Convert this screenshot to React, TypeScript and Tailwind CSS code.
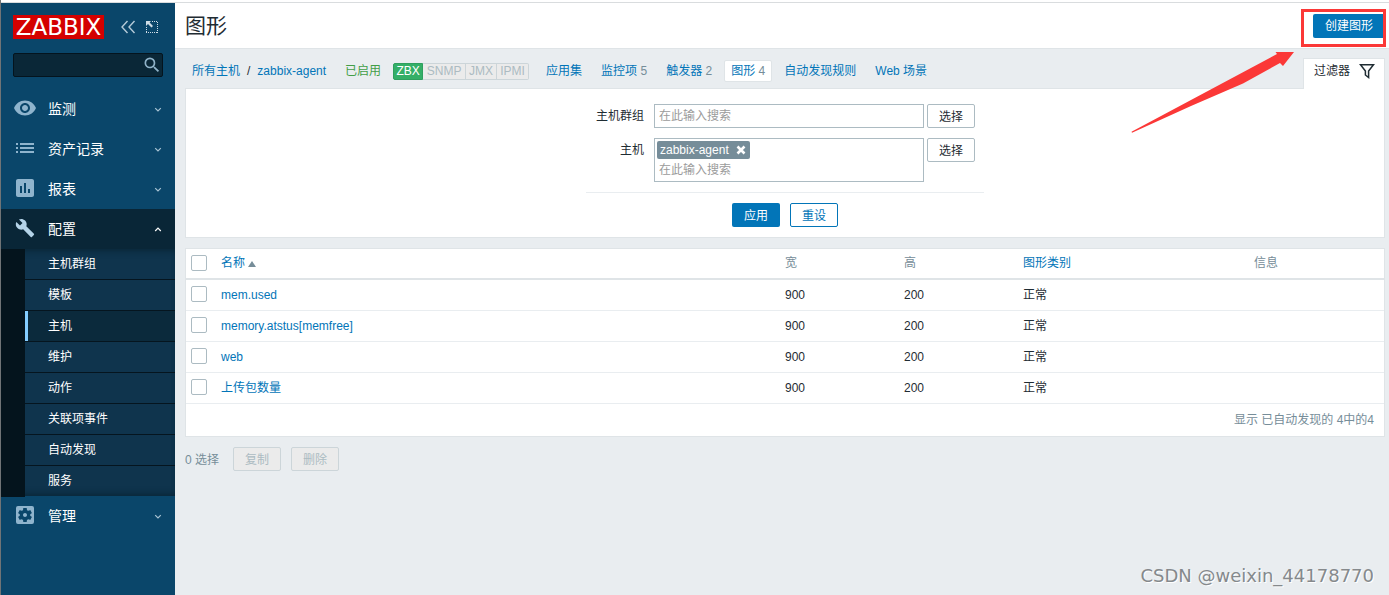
import React, { FC, ReactNode } from 'react'
import { IconType } from 'react-icons'
import {
  MdAssessment,
  MdBuild,
  MdList,
  MdSearch,
  MdSettingsApplications,
  MdVisibility,
} from 'react-icons/md'

interface MenuRow {
  label: string,
  Icon: IconType,
  items?: string[],
}

const menu: MenuRow[] = [
  { label: '监测', Icon: MdVisibility },
  { label: '资产记录', Icon: MdList },
  { label: '报表', Icon: MdAssessment },
  {
    label: '配置',
    Icon: MdBuild,
    items: ['主机群组', '模板', '主机', '维护', '动作', '关联项事件', '自动发现', '服务'],
  },
  { label: '管理', Icon: MdSettingsApplications },
]

const graphs = ['mem.used', 'memory.atstus[memfree]', 'web', '上传包数量']

const Chevron: FC<{ up?: boolean }> = ({ up }) => (
  <svg width="8" height="6" viewBox="0 0 8 6" fill="none" stroke="currentColor" strokeWidth="1.2" className={up ? 'text-white' : 'text-[#a9c4d4]'}>
    <path d={up ? 'M1.2 5 L4 2.2 L6.8 5' : 'M1.2 2.2 L4 5 L6.8 2.2'} />
  </svg>
)

const Sidebar: FC = () => (
  <aside className="w-[174px] shrink-0 bg-[#0a466a] text-white">
    <div className="flex h-12 items-center pl-3">
      <a href="#" className="flex h-6 w-[91px] items-center justify-center bg-[#d40000] font-['DejaVu_Sans',sans-serif] text-[23px] leading-6">
        ZABBIX
      </a>
      <button type="button" aria-label="收起" className="ml-4 text-[#b5cbd8]">
        <svg width="16" height="14" viewBox="0 0 16 14" fill="none" stroke="currentColor" strokeWidth="1.4">
          <path d="M7.5 1 L2 7 L7.5 13 M14.5 1 L9 7 L14.5 13" />
        </svg>
      </button>
      <button type="button" aria-label="隐藏侧栏" className="ml-[9px] text-[#cfdde6]">
        <svg width="14" height="14" viewBox="0 0 14 14" fill="none" stroke="currentColor">
          <path strokeDasharray="1 1" d="M7 1.5 H13 M12.5 2 V13 M1 12.5 H13 M1.5 7 V13" />
          <path fill="currentColor" stroke="none" d="M1 1 H6 L4.6 2.6 L8 6 L6.5 7.5 L3 4 L1 6 Z" />
        </svg>
      </button>
    </div>

    <div className="relative mx-3 mt-[2px]">
      <input type="text" aria-label="搜索" className="block h-6 w-full rounded-xs border border-[#04141e] bg-[#0a2737] pr-7 pl-2 text-xs outline-none" />
      <button type="button" aria-label="搜索" className="absolute top-[2px] right-px text-[#90b3c9]">
        <MdSearch size={20} />
      </button>
    </div>

    <nav className="mt-3">
      {menu.map(({ label, Icon, items }) => (
        <div key={label}>
          <a href="#" className={items ? 'flex h-10 items-center bg-[#092637] pr-[13px] pl-3' : 'flex h-10 items-center pr-[13px] pl-3'}>
            <span className={items ? 'flex w-6 justify-center pb-[2px] text-[#b4d3e8]' : 'flex w-6 justify-center pb-[2px] text-[#8fb4cd]'}>
              <Icon size={items ? 20 : 24} />
            </span>
            <span className="ml-[11px] flex-1 text-sm">{label}</span>
            <Chevron up={!!items} />
          </a>
          {items && (
            <ul className="divide-y divide-[#05151f] bg-[#0f344d] shadow-[inset_0_6px_6px_-4px_#092637,inset_0_-6px_6px_-4px_#092637]">
              {items.map(item => (
                <li key={item} className="flex">
                  <span className="-mb-px w-6 bg-[#04141d]" />
                  <a
                    href="#"
                    className={item === '主机'
                      ? 'flex h-[30px] flex-1 items-center border-l-3 border-[#84cdff] bg-[#0b2a3c] pl-5 text-xs'
                      : 'flex h-[30px] flex-1 items-center pl-[23px] text-xs'}
                  >
                    {item}
                  </a>
                </li>
              ))}
            </ul>
          )}
        </div>
      ))}
    </nav>
  </aside>
)

const NavLink: FC<{ label: string, count?: number }> = ({ label, count }) => (
  <a href="#" className="text-[#0275b8]">
    {label}
    {count && <span className="text-[#768d99]"> {count}</span>}
  </a>
)

const HostNav: FC = () => (
  <nav className="flex items-center pt-[11px] pl-[7px]">
    <NavLink label="所有主机" />
    <span className="mx-[7px]">/</span>
    <NavLink label="zabbix-agent" />
    <span className="ml-[19px] text-[#429e47]">已启用</span>
    <div className="mr-[17px] ml-3 flex h-[17px] items-stretch rounded-xs text-center leading-[15px]">
      <span className="w-[30px] rounded-l-xs border border-[#2f9f5e] bg-[#34af67] text-white">ZBX</span>
      <span className="w-[43px] border-y border-r border-[#ccd5d9] bg-[#ebebeb] text-[#acbbc2]">SNMP</span>
      <span className="w-[31px] border-y border-r border-[#ccd5d9] bg-[#ebebeb] text-[#acbbc2]">JMX</span>
      <span className="w-8 rounded-r-xs border-y border-r border-[#ccd5d9] bg-[#ebebeb] text-[#acbbc2]">IPMI</span>
    </div>
    <div className="flex items-center gap-[19px]">
      <NavLink label="应用集" />
      <NavLink label="监控项" count={5} />
      <NavLink label="触发器" count={2} />
      <div className="-mx-[7px] flex h-[22px] items-center rounded-xs border border-[#dfe4e7] bg-white px-[6px]">
        <NavLink label="图形" count={4} />
      </div>
      <NavLink label="自动发现规则" />
      <NavLink label="Web 场景" />
    </div>
  </nav>
)

const SelectButton: FC = () => (
  <button type="button" className="h-6 w-12 rounded-xs border border-[#acbbc2] bg-white pt-px">选择</button>
)

const Field: FC<{ id: string, label: string, children?: ReactNode }> = ({ id, label, children }) => (
  <div className="flex items-start">
    <label htmlFor={id} className="mr-[10px] w-[58px] text-right leading-6">{label}</label>
    <div className="mr-[3px] w-[270px] border border-[#acbbc2] p-[2px]">
      {children}
      <input id={id} type="text" placeholder="在此输入搜索" className="block h-[18px] w-full px-[2px] outline-none placeholder:text-[#9b9b9b]" />
    </div>
    <SelectButton />
  </div>
)

const Filter: FC = () => (
  <form className="border border-[#dfe4e7] bg-white pt-[15px] pb-[10px]" onSubmit={e => e.preventDefault()}>
    <div className="mx-auto w-[398px]">
      <div className="flex flex-col gap-[10px] border-b border-[#e9edf0] pb-[10px]">
        <Field id="groups" label="主机群组" />
        <Field id="hosts" label="主机">
          <div className="mb-[2px] flex">
            <span className="flex h-[18px] items-center rounded-xs bg-[#768d99] pr-1 pl-[3px] text-white">
              zabbix-agent
              <button type="button" aria-label="移除" className="ml-[7px]">
                <svg width="10" height="10" viewBox="0 0 10 10" stroke="currentColor" strokeWidth="2.6">
                  <path d="M1.5 1.5 L8.5 8.5 M8.5 1.5 L1.5 8.5" />
                </svg>
              </button>
            </span>
          </div>
        </Field>
      </div>
      <div className="mt-[10px] flex justify-center gap-[10px]">
        <button type="submit" className="h-6 w-12 rounded-xs bg-[#0275b8] pt-px text-white">应用</button>
        <button type="reset" className="h-6 w-12 rounded-xs border border-[#0275b8] pt-px text-[#0275b8]">重设</button>
      </div>
    </div>
  </form>
)

const Check: FC<{ label: string }> = ({ label }) => (
  <input type="checkbox" aria-label={label} className="block size-4 appearance-none rounded-xs border border-[#acbbc2] bg-white" />
)

const GraphTable: FC = () => (
  <div className="mt-[10px] border border-[#dfe4e7] bg-white">
    <table className="w-full table-fixed border-separate border-spacing-0 text-left">
      <thead>
        <tr className="h-[31px] text-[#768d99] *:border-b-2 *:border-[#dfe4e7] *:px-[5px] *:pb-[2px] *:font-normal">
          <th className="w-[30px]"><Check label="全选" /></th>
          <th>
            <a href="#" className="flex items-center gap-[3px] text-[#0275b8]">
              名称
              <svg width="8" height="6" viewBox="0 0 8 6" className="mt-[2px] text-[#768d99]">
                <path fill="currentColor" d="M4 0 L8 6 H0 Z" />
              </svg>
            </a>
          </th>
          <th className="w-[119px]">宽</th>
          <th className="w-[119px]">高</th>
          <th className="w-[231px]"><a href="#" className="text-[#0275b8]">图形类别</a></th>
          <th className="w-[135px]">信息</th>
        </tr>
      </thead>
      <tbody>
        {graphs.map(name => (
          <tr key={name} className="h-[31px] *:border-b *:border-[#e9edf0] *:px-[5px]">
            <td className="pb-[2px]"><Check label={name} /></td>
            <td><a href="#" className="text-[#0275b8]">{name}</a></td>
            <td>900</td>
            <td>200</td>
            <td>正常</td>
            <td />
          </tr>
        ))}
      </tbody>
    </table>
    <p className="pr-[10px] text-right leading-8 text-[#768d99]">显示 已自动发现的 4中的4</p>
  </div>
)

const App: FC = () => {
  return (
    <div className="relative flex min-h-screen flex-col overflow-hidden border-l border-[#707476] bg-[#e9edf0] font-['Liberation_Sans','Noto_Sans_CJK_SC',sans-serif] text-xs leading-4 text-[#1f2c33]">
      <div className="h-[3px] border-b border-[#d9dcde] bg-white" />
      <div className="flex flex-1">
        <Sidebar />
        <main className="min-w-0 flex-1">
          <header className="flex h-[46px] items-center justify-between border-b border-[#dfe4e7] bg-white pr-1 pl-[10px]">
            <h1 className="text-[21px] leading-7">图形</h1>
            <button type="button" className="h-6 w-[72px] rounded-xs bg-[#0275b8] pt-px text-white">创建图形</button>
          </header>

          <div className="pr-1 pl-[10px]">
            <div className="flex items-start justify-between">
              <HostNav />
              {/* tab overlaps the filter's top border */}
              <button type="button" className="relative -mb-px mt-[9px] flex h-[31px] w-[82px] items-center gap-[9px] border border-b-0 border-[#dfe4e7] bg-white pb-[6px] pl-[10px]">
                过滤器
                <svg width="16" height="16" viewBox="0 0 16 16" fill="none" stroke="currentColor" strokeWidth="1.5">
                  <path d="M1.5 1.8 H14.5 L9.6 8 V14.5 L6.4 12 V8 Z" />
                </svg>
              </button>
            </div>
            <Filter />
            <GraphTable />
            <div className="mt-[10px] flex items-center text-[#768d99]">
              <span className="mr-[14px] pt-px">0 选择</span>
              <button type="button" disabled className="mr-[10px] h-6 w-12 rounded-xs border border-[#ccd5d9] bg-[#ebebeb] pt-px text-[#acbbc2]">复制</button>
              <button type="button" disabled className="h-6 w-12 rounded-xs border border-[#ccd5d9] bg-[#ebebeb] pt-px text-[#acbbc2]">删除</button>
            </div>
          </div>
        </main>
      </div>

      {/* annotations */}
      <div className="pointer-events-none absolute top-[9px] right-[3px] h-[38px] w-[85px] border-3 border-[#fb3837]" />
      <svg width="163" height="82" viewBox="0 0 163 82" className="pointer-events-none absolute top-[51px] right-[95px]">
        <path fill="#fb3837" d="M0.5 80.8 L146 3 L144.5 1 L163 1 L152 15 L149 12 L112 32.5 L60 55 L1 81.8 Z" />
      </svg>
      <span className="pointer-events-none absolute right-[15px] bottom-[7px] font-['DejaVu_Sans',sans-serif] text-lg leading-6 text-[#85898c] [text-shadow:1px_1px_0_#ffffff]">
        CSDN @weixin_44178770
      </span>
    </div>
  )
}

export default App
